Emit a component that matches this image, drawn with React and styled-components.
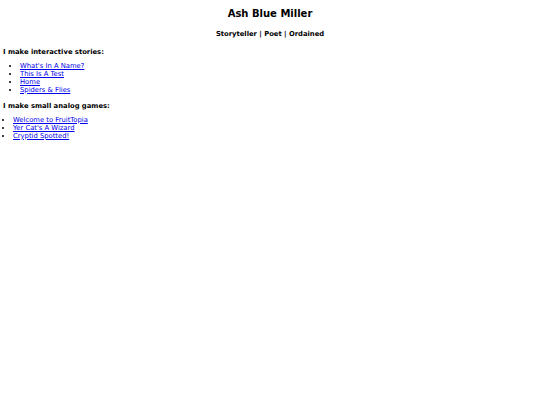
import React from "react";
import styled, { createGlobalStyle } from "styled-components";

const GlobalStyle = createGlobalStyle`
  body {
    margin: 0;
    padding: 3px;
    font-family: "DejaVu Sans", Verdana, sans-serif;
    font-size: 6.8px;
    line-height: 8px;
    color: #000;
    background: #fff;
  }
`;

const Title = styled.h1`
  margin: 5px 0 0;
  font-size: 10px;
  line-height: 12px;
  text-align: center;
`;

const Tagline = styled.h4`
  margin: 9.5px 0 0;
  font-size: 6.8px;
  line-height: 8px;
  text-align: center;
`;

const Heading = styled.p`
  margin: ${(p) => (p.$first ? "10px" : "8px")} 0 0;
  font-weight: bold;
`;

const LinkList = styled.ul`
  margin: 6px 0 0;
  padding-left: ${(p) => (p.$flush ? "10px" : "17px")};
  list-style: disc;
`;

const Item = styled.li`
  line-height: 8px;
`;

const Link = styled.a`
  color: #0000ee;
  text-decoration: underline;
`;

const stories = ["What's In A Name?", "This Is A Test", "Home", "Spiders & Flies"];
const games = ["Welcome to FruitTopia", "Yer Cat's A Wizard", "Cryptid Spotted!"];

export default function App() {
  return (
    <>
      <GlobalStyle />
      <Title>Ash Blue Miller</Title>
      <Tagline>Storyteller | Poet | Ordained</Tagline>
      <Heading $first>I make interactive stories:</Heading>
      <LinkList>
        {stories.map((s) => (
          <Item key={s}>
            <Link href="#">{s}</Link>
          </Item>
        ))}
      </LinkList>
      <Heading>I make small analog games:</Heading>
      <LinkList $flush>
        {games.map((g) => (
          <Item key={g}>
            <Link href="#">{g}</Link>
          </Item>
        ))}
      </LinkList>
    </>
  );
}
